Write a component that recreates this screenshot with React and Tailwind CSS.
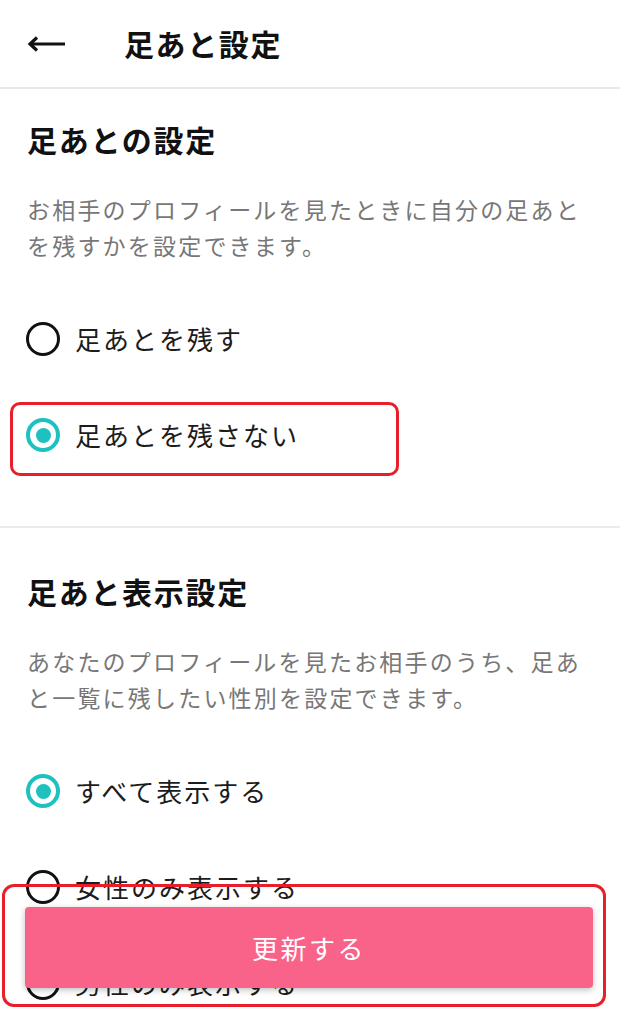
import React from "react";

const font = { fontFamily: '"Noto Sans CJK JP", "Noto Sans", sans-serif' };

function Radio({ checked }) {
  if (checked) {
    return (
      <span className="flex h-[34px] w-[34px] shrink-0 items-center justify-center rounded-full border-[4px] border-[#1fc0c0]">
        <span className="h-[15px] w-[15px] rounded-full bg-[#1fc0c0]" />
      </span>
    );
  }
  return <span className="h-[34px] w-[34px] shrink-0 rounded-full border-[3px] border-[#111]" />;
}

function Option({ label, checked, marked }) {
  return (
    <div className="relative flex h-[96px] items-center gap-[15px] pl-[26px]">
      <Radio checked={checked} />
      <span className="text-[26px] leading-none tracking-[2px] text-[#1c1c1c]">{label}</span>
      {marked && (
        <div className="absolute left-[10px] top-[15px] h-[74px] w-[389px] rounded-[10px] border-[3px] border-[#e81f2b]" />
      )}
    </div>
  );
}

function Section({ title, desc, options, top }) {
  return (
    <section className={top}>
      <h2 className="px-[27px] text-[30px] font-bold leading-[40px] tracking-[1.7px] text-[#111]">{title}</h2>
      <p className="mt-[32px] px-[27px] text-[23px] leading-[36px] tracking-[2.2px] text-[#777]">{desc}</p>
      <div className="mt-[28px]">
        {options.map((o) => (
          <Option key={o.label} {...o} />
        ))}
      </div>
    </section>
  );
}

export default function App() {
  return (
    <div className="relative h-[1024px] w-[620px] overflow-hidden bg-white" style={font}>
      <header className="flex h-[89px] items-center border-b-2 border-[#e8e8e8] pl-[27px]">
        <svg width="40" height="18" viewBox="0 0 40 18" fill="none" stroke="#111" strokeWidth="3.2">
          <path d="M3 9H38" />
          <path d="M10 2.5L3 9l7 6.5" strokeLinejoin="miter" />
        </svg>
        <h1 className="ml-[57px] text-[30px] font-bold tracking-[1.6px] text-[#111]">足あと設定</h1>
      </header>

      <Section
        top="pt-[30px] pb-[43px]"
        title="足あとの設定"
        desc="お相手のプロフィールを見たときに自分の足あとを残すかを設定できます。"
        options={[
          { label: "足あとを残す" },
          { label: "足あとを残さない", checked: true, marked: true },
        ]}
      />

      <div className="h-[2px] bg-[#ebebeb]" />

      <Section
        top="pt-[43px]"
        title="足あと表示設定"
        desc="あなたのプロフィールを見たお相手のうち、足あと一覧に残したい性別を設定できます。"
        options={[
          { label: "すべて表示する", checked: true },
          { label: "女性のみ表示する" },
          { label: "男性のみ表示する" },
        ]}
      />

      <div className="absolute left-[2px] top-[884px] h-[123px] w-[604px] rounded-[12px] border-[3px] border-[#e81f2b]" />
      <button className="absolute left-[25px] top-[907px] flex h-[81px] w-[568px] items-center justify-center rounded-[4px] bg-[#fa6389] text-[26px] tracking-[2.5px] text-white shadow-[0_2px_6px_rgba(0,0,0,0.25)]">
        更新する
      </button>
    </div>
  );
}
